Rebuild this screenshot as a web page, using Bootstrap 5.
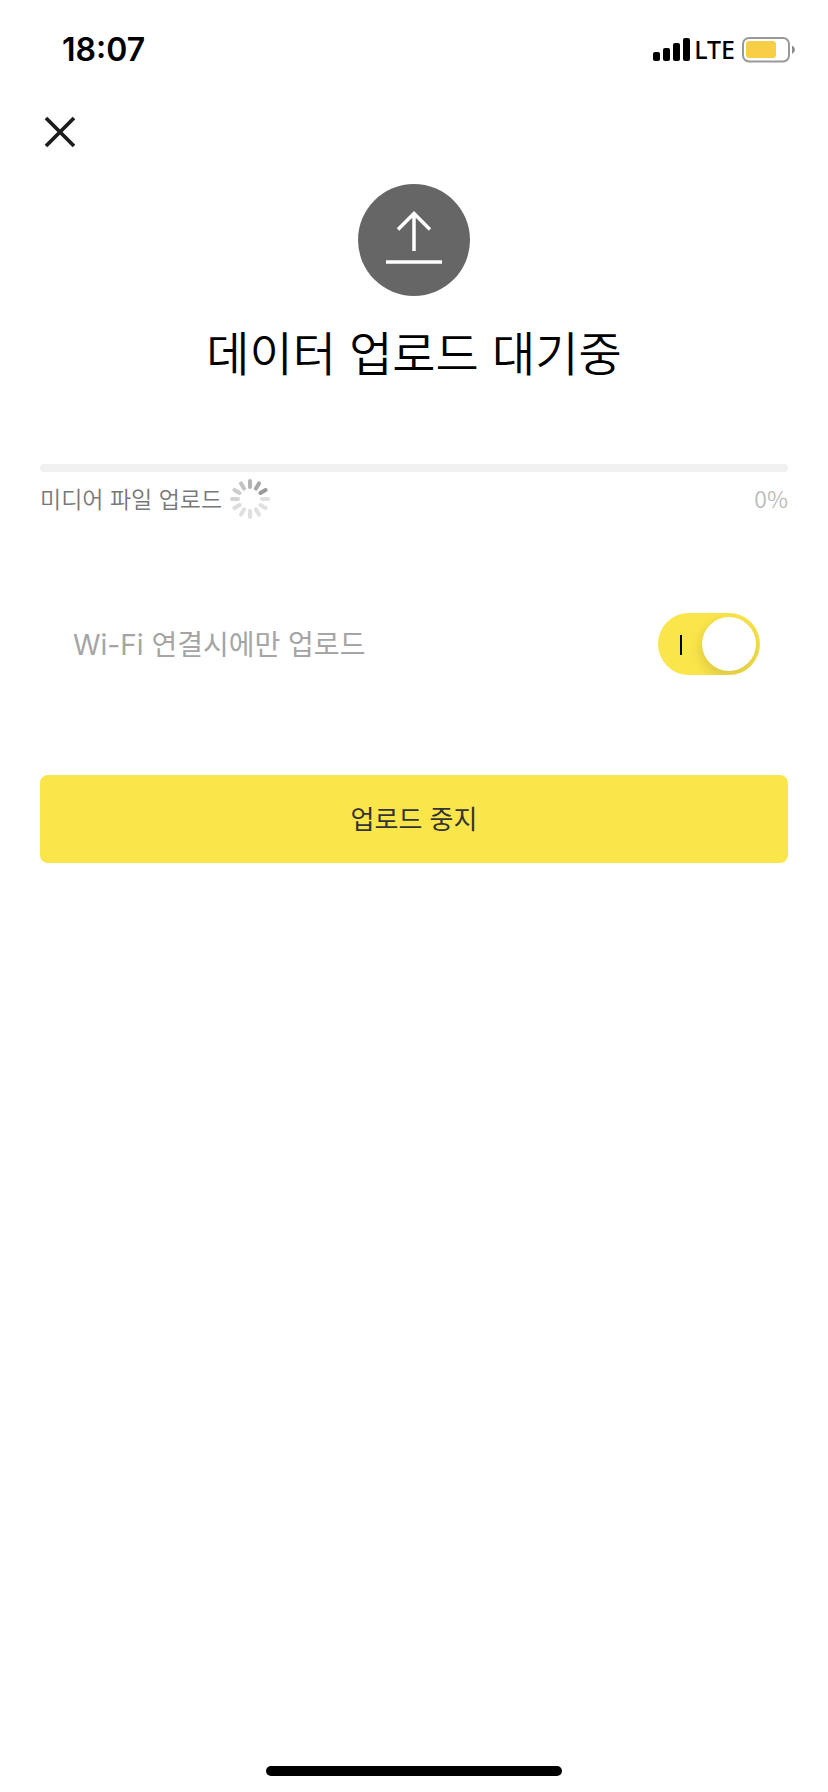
<!DOCTYPE html>
<html lang="ko">
<head>
<meta charset="utf-8">
<meta name="viewport" content="width=device-width, initial-scale=1">
<title>데이터 업로드</title>
<link href="https://cdn.jsdelivr.net/npm/bootstrap@5.3.0/dist/css/bootstrap.min.css" rel="stylesheet">
<style>
  body { font-family: "Noto Sans CJK KR", sans-serif; color: #000; background: #fff; }
  svg { display: block; flex: none; }
  .status-bar { height: 100px; padding: 0 32px 0 62px; }
  .status-time { font-family: Inter, sans-serif; font-size: 32px; line-height: 40px; font-weight: 600; }
  .status-net { font-family: "Noto Sans", sans-serif; font-size: 25px; line-height: 32px; font-weight: 500; margin: 0 7px 0 4px; padding-bottom: 2px; }
  .close-btn { margin: 8px 0 0 36px; width: 48px; height: 48px; }
  .upload-icon { margin-top: 28px; }
  .screen-title { font-size: 47px; line-height: 64px; margin: 23px 0 81px; font-weight: 350; }
  .page-body { padding: 0 40px; }
  .progress { height: 8px; border-radius: 4px; background: #f0f0f0; }
  .file-row { height: 40px; margin-top: 7px; font-size: 23px; line-height: 32px; color: #777; font-weight: 350; }
  .file-row span { padding-bottom: 3px; }
  .file-label { gap: 6px; }
  .percent { color: #bbb; }
  .wifi-row { margin: 94px 28px 100px 33px; font-family: Inter, "Noto Sans CJK KR", sans-serif; font-size: 28px; line-height: 40px; color: #a5a5a5; }
  .wifi-row label { padding-top: 2px; }
  .wifi-switch.form-check-input {
    position: relative; width: 102px; height: 62px; margin: 0; border: 0; border-radius: 31px;
    background: #fae54b; overflow: hidden; flex: none;
  }
  .wifi-switch::before, .wifi-switch::after { content: ""; position: absolute; }
  .wifi-switch::before { left: 22px; top: 22px; width: 2px; height: 20px; background: #000; }
  .wifi-switch::after { right: 4px; top: 4px; width: 54px; height: 54px; border-radius: 50%; background: #fff; box-shadow: 0 5px 14px rgba(0,0,0,.15); }
  .wifi-switch:not(:checked) { background: #ddd; }
  .wifi-switch:not(:checked)::after { right: 44px; }
  .stop-btn { --bs-btn-bg: #fae54b; --bs-btn-color: #333; --bs-btn-hover-bg: #f2dc3c; --bs-btn-border-width: 0; --bs-btn-border-radius: 8px; height: 88px; padding: 0 0 3px; font-size: 26px; line-height: 40px; }
  .home-bar { width: 296px; height: 10px; border-radius: 5px; background: #000; margin-bottom: 16px; }
</style>
</head>
<body>
<div class="d-flex flex-column min-vh-100">
  <header class="status-bar d-flex justify-content-between align-items-center">
    <span class="status-time">18:07</span>
    <div class="d-flex align-items-center">
      <svg width="37" height="24" viewBox="0 0 37 24" aria-hidden="true">
        <rect y="14" width="7" height="9" rx="2"/><rect x="10" y="10" width="7" height="13" rx="2"/>
        <rect x="20" y="5" width="7" height="18" rx="2"/><rect x="30" width="7" height="23" rx="2"/>
      </svg>
      <span class="status-net">LTE</span>
      <svg width="54" height="26" viewBox="0 0 54 26" aria-hidden="true">
        <rect x="1" y="1" width="46" height="23.5" rx="6" fill="none" stroke="#999" stroke-width="2"/>
        <rect x="4" y="4" width="30" height="17" rx="3" fill="#f7ce46"/>
        <path d="M50 8.500q3 1.500 3 4.300t-3 4.300z" fill="#8c8c8c"/>
      </svg>
    </div>
  </header>

  <button type="button" class="close-btn btn p-0 border-0 d-flex align-items-center justify-content-center" aria-label="닫기">
    <svg width="32" height="32" viewBox="0 0 32 32" stroke="#1c1c1c" stroke-width="3.800"><path d="M2 2l28 28M30 2L2 30"/></svg>
  </button>

  <main class="page-body flex-grow-1">
    <svg class="upload-icon mx-auto" width="112" height="112" viewBox="0 0 112 112" fill="none" stroke="#fff" stroke-width="3.500" aria-hidden="true">
      <circle cx="56" cy="56" r="56" fill="#666" stroke="none"/>
      <path d="M56 67V30M40 45.500l16-16 16 16M28 78h56"/>
    </svg>
    <h1 class="screen-title text-center">데이터 업로드 대기중</h1>

    <div class="progress" role="progressbar" aria-label="미디어 파일 업로드" aria-valuenow="0" aria-valuemin="0" aria-valuemax="100">
      <div class="progress-bar" style="width: 0%"></div>
    </div>
    <div class="file-row d-flex align-items-center justify-content-between">
      <div class="file-label d-flex align-items-center">
        <span>미디어 파일 업로드</span>
        <svg width="44" height="44" viewBox="-22 -22 44 44" stroke-width="4" stroke-linecap="round" stroke="#e0e0e0" aria-hidden="true">
          <path d="M0-18V-12" stroke="#b5b5b5"/>
          <path d="M0-18V-12" stroke="#a8a8a8" transform="rotate(30)"/>
          <path d="M0-18V-12" stroke="#999" transform="rotate(60)"/>
          <path d="M0-18V-12" transform="rotate(90)"/>
          <path d="M0-18V-12" transform="rotate(120)"/>
          <path d="M0-18V-12" transform="rotate(150)"/>
          <path d="M0-18V-12" transform="rotate(180)"/>
          <path d="M0-18V-12" transform="rotate(210)"/>
          <path d="M0-18V-12" stroke="#dcdcdc" transform="rotate(240)"/>
          <path d="M0-18V-12" stroke="#d4d4d4" transform="rotate(270)"/>
          <path d="M0-18V-12" stroke="#ccc" transform="rotate(300)"/>
          <path d="M0-18V-12" stroke="#c2c2c2" transform="rotate(330)"/>
        </svg>
      </div>
      <span class="percent">0%</span>
    </div>

    <div class="wifi-row d-flex align-items-center justify-content-between">
      <label for="wifiOnly">Wi-Fi 연결시에만 업로드</label>
      <input class="form-check-input wifi-switch" type="checkbox" role="switch" id="wifiOnly" checked>
    </div>

    <button type="button" class="stop-btn btn w-100">업로드 중지</button>
  </main>

  <div class="home-bar mx-auto"></div>
</div>
<script src="https://cdn.jsdelivr.net/npm/bootstrap@5.3.0/dist/js/bootstrap.bundle.min.js"></script>
</body>
</html>
